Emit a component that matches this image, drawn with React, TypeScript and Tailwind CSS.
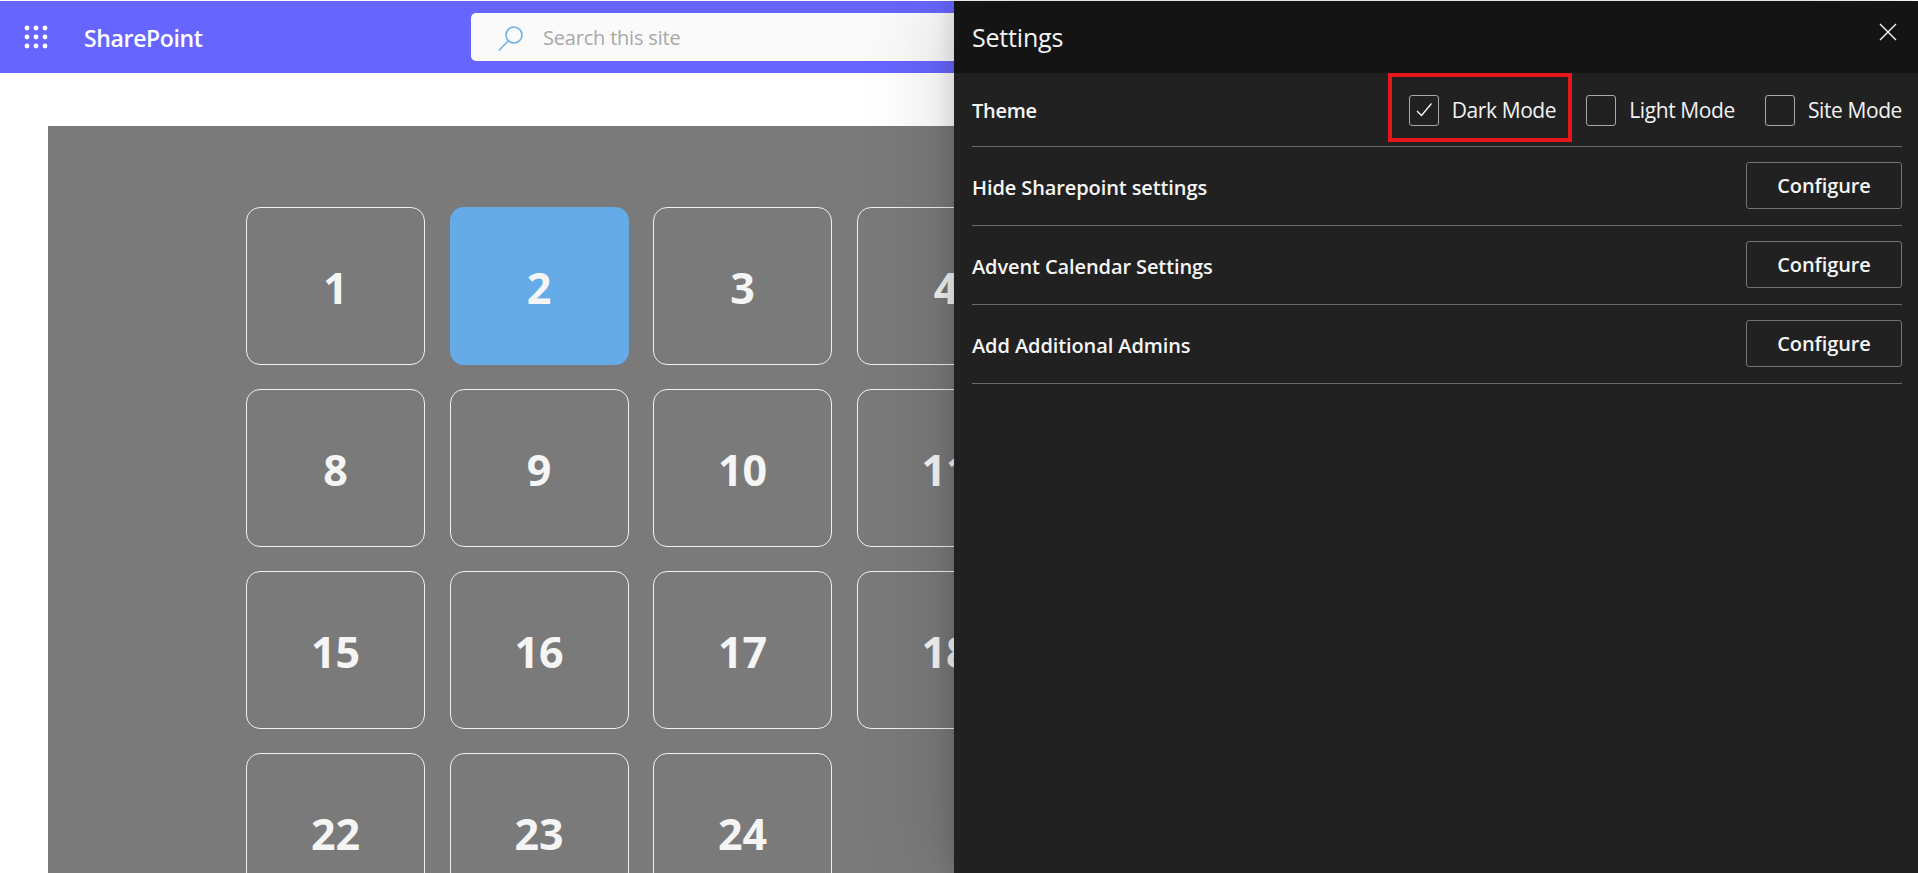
import React from "react";

const days = Array.from({ length: 24 }, (_, i) => i + 1);

const rows = ["Hide Sharepoint settings", "Advent Calendar Settings", "Add Additional Admins"];

const Waffle = () => (
  <svg width="24" height="24" viewBox="0 0 24 24" fill="white">
    {[3, 12, 21].map((y) =>
      [3, 12, 21].map((x) => <circle key={`${x}-${y}`} cx={x} cy={y} r="2.4" />)
    )}
  </svg>
);

const SearchIcon = () => (
  <svg className="mt-[2px]" width="26" height="26" viewBox="0 0 26 26" fill="none" stroke="#6fb1e3" strokeWidth="1.6">
    <circle cx="16" cy="10" r="8" />
    <path d="M10 16 L1.5 25" strokeLinecap="round" />
  </svg>
);

const ThemeOption = ({ label, checked }: { label: string; checked?: boolean }) => (
  <div className="flex items-center gap-[13px]">
    <div className="mt-[1px] flex h-[31px] w-[30px] items-center justify-center rounded-[3px] border border-[#a8a8a8]">
      {checked && (
        <svg width="18" height="18" viewBox="0 0 18 18" fill="none" stroke="white" strokeWidth="1.2">
          <path d="M2 10 L6.5 14.5 L16.5 2.5" />
        </svg>
      )}
    </div>
    <span className="mt-[3px] text-[21px] tracking-[-0.4px] text-[#f2f2f2]">{label}</span>
  </div>
);

const SettingsPanel = () => (
  <aside className="absolute bottom-0 right-0 top-px flex w-[964px] flex-col bg-[#212121] shadow-[-6px_0_16px_rgba(0,0,0,0.1),-24px_0_70px_rgba(0,0,0,0.1)]">
    <div className="flex h-[72px] shrink-0 items-center justify-between bg-[#141414] pl-[18px] pr-[20px]">
      <span className="mt-[2px] text-[25px] tracking-[-0.2px] text-[#f5f5f5]">Settings</span>
      <svg className="mb-[10px]" width="20" height="20" viewBox="0 0 20 20" fill="none" stroke="white" strokeWidth="1.3">
        <path d="M2 2 L18 18 M18 2 L2 18" />
      </svg>
    </div>

    <div className="flex flex-col pl-[18px] pr-[16px]">
      <div className="relative flex h-[74px] items-center justify-between border-b border-[#6a6a6a]">
        <span className="mt-[3px] text-[20px] font-semibold tracking-[-0.3px] text-[#f5f5f5]">Theme</span>
        <div className="flex items-center gap-[30px]">
          <ThemeOption label="Dark Mode" checked />
          <ThemeOption label="Light Mode" />
          <ThemeOption label="Site Mode" />
        </div>
        {/* annotation box drawn on the screenshot */}
        <div className="absolute left-[416px] top-0 h-[69px] w-[184px] border-[4px] border-[#e4181c]" />
      </div>

      {rows.map((row) => (
        <div key={row} className="flex h-[79px] items-center justify-between border-b border-[#6a6a6a]">
          <span className="mt-[3px] text-[20px] font-semibold tracking-[-0.1px] text-[#f5f5f5]">{row}</span>
          <button className="mb-[1px] h-[47px] w-[156px] rounded-[3px] border border-[#737373] text-[20px] font-semibold tracking-[-0.1px] text-[#f5f5f5]">
            Configure
          </button>
        </div>
      ))}
    </div>
  </aside>
);

export default function App() {
  return (
    <div className="relative h-[873px] overflow-hidden bg-white pt-px font-['Open_Sans',sans-serif]">
      {/* Top bar */}
      <header className="flex h-[72px] items-center bg-[#6666ff]">
        <div className="ml-[24px] flex">
          <Waffle />
        </div>
        <span className="ml-[36px] mt-[2px] w-[117px] text-[23px] font-semibold tracking-[-0.35px] text-white">SharePoint</span>
        <div className="ml-[270px] flex h-[48px] w-[900px] items-center rounded-[5px] bg-[#fafafa] pl-[27px]">
          <SearchIcon />
          <span className="ml-[19px] mt-[2px] text-[20px] tracking-[-0.2px] text-[#a8a8a8]">Search this site</span>
        </div>
      </header>

      {/* Advent calendar */}
      <main className="mx-[48px] mt-[53px] h-[800px] bg-[#7a7a7a] pt-[81px]">
        <div className="ml-[198px] grid w-[1400px] grid-cols-7 gap-x-[24.5px] gap-y-[24px]">
          {days.map((day) => (
            <div
              key={day}
              className={`flex h-[158px] items-center justify-center rounded-[14px] pt-[5px] text-[43px] font-bold text-[#f5f5f5] ${
                day === 2 ? "bg-[#65abe7]" : "border border-[#f0f0f0]"
              }`}
            >
              {day}
            </div>
          ))}
        </div>
      </main>

      <SettingsPanel />
    </div>
  );
}
